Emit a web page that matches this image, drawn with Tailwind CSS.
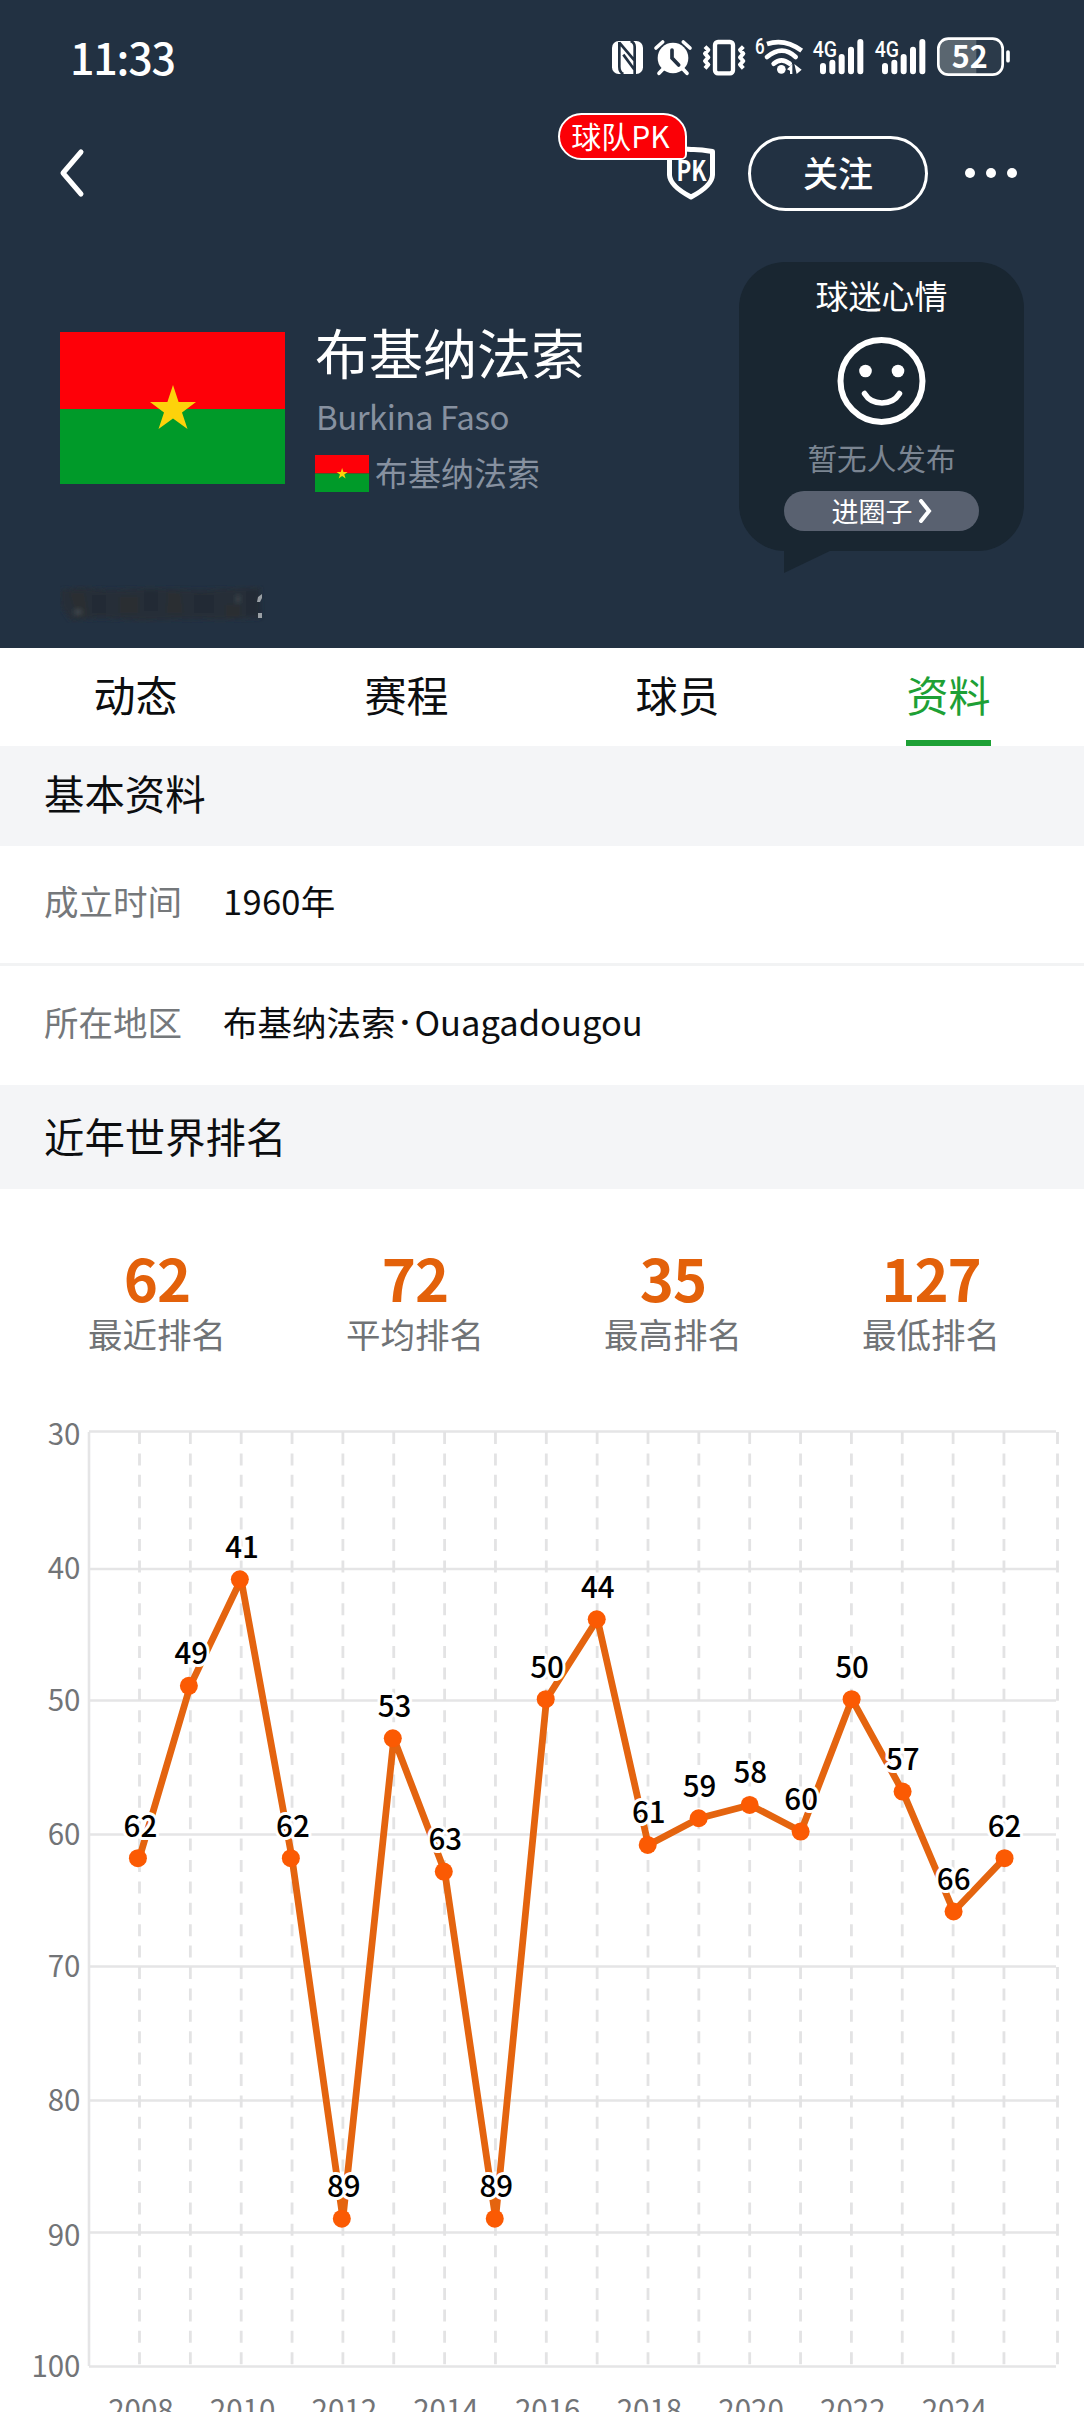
<!DOCTYPE html>
<html lang="zh-CN">
<head>
<meta charset="utf-8">
<title>布基纳法索</title>
<script src="https://cdn.jsdelivr.net/npm/@tailwindcss/browser@4"></script>
</head>
<body class="w-[1084px] h-[2412px] overflow-hidden bg-white font-['Noto_Sans_CJK_SC',sans-serif] text-[#0c0e10]">
<header class="h-[648px] bg-[#223142] text-white">
  <div class="flex h-[90px] items-start justify-between pl-[70px] pr-[54px] pt-5">
    <div class="text-[43px] leading-[72px] font-medium tracking-[-1.2px]">11:33</div>
    <svg class="h-[70px] w-[440px] shrink-0" viewBox="0 0 1320 210" fill="#fff" stroke="none">
      <rect x="66" y="63" width="93" height="99" rx="20"/>
      <g fill="none" stroke="#223142" stroke-width="8"><path d="M88 66v74q0 16 12 22M134 162V80q0-12-12-17M88 68l46 54M100 104l34 46"/></g>
      <circle cx="249" cy="114" r="46"/>
      <path d="M198 84l20-18M300 84l-20-18M220 146l-13 14M278 146l13 14" stroke="#fff" stroke-width="11" stroke-linecap="round"/>
      <path d="M246 90v24l20 21" fill="none" stroke="#223142" stroke-width="11" stroke-linecap="round"/>
      <rect x="375" y="66" width="54" height="94" rx="9" fill="none" stroke="#fff" stroke-width="13"/>
      <path d="M345 80l10 10-10 11 10 11-10 11 10 11-10 11M460 80l-10 10 10 11-10 11 10 11-10 11 10 11" fill="none" stroke="#fff" stroke-width="12" stroke-linejoin="round"/>
      <g fill="none" stroke="#fff" stroke-width="14"><path d="M531 72q53-18 104 20"/><path d="M531 111q46-38 86 0M551 131q23-20 48 0" stroke-linecap="round"/></g>
      <circle cx="574" cy="148" r="13"/>
      <path d="M591 148l16-16v30h-7v-10zM613 132l22 17-15 13z"/>
      <g font-family="Roboto, sans-serif" font-weight="500"><text x="495" y="103" font-size="66" textLength="29" lengthAdjust="spacingAndGlyphs">6</text>
      <text x="668" y="110" font-size="66" textLength="73" lengthAdjust="spacingAndGlyphs">4G</text>
      <text x="854" y="110" font-size="66" textLength="73" lengthAdjust="spacingAndGlyphs">4G</text></g>
      <g stroke="#fff" stroke-width="18" stroke-linecap="round"><path d="M699 138v16M727 128v26M755 111v43M783 89v65M811 66v88M885 138v16M913 128v26M941 111v43M969 89v65M997 66v88"/></g>
      <rect x="1043" y="56" width="195" height="108" rx="30" fill="#2b3a4a"/>
      <path d="M1073 56h86v108h-86a30 30 0 0 1-30-30V86a30 30 0 0 1 30-30z" fill="#5a6670"/>
      <rect x="1045" y="56" width="193" height="108" rx="30" fill="none" stroke="#fff" stroke-width="8"/>
      <path d="M1254 96v26" stroke="#fff" stroke-width="11" stroke-linecap="round"/>
      <text x="1139" y="144" font-size="92" font-weight="700" text-anchor="middle" font-family="Noto Sans CJK SC, sans-serif" textLength="108" lengthAdjust="spacingAndGlyphs">52</text>
    </svg>
  </div>

  <div class="flex h-[166px] items-center pl-[58px] pr-[67px]">
    <svg class="h-[52px] w-7" viewBox="0 0 28 52" fill="none" stroke="#fff" stroke-width="5" stroke-linecap="round" stroke-linejoin="round"><path d="M23 5L5 26l18 21"/></svg>
    <div class="relative ml-auto mr-[33px] h-[54px] w-12">
      <svg class="size-full" viewBox="0 0 48 54"><path d="M24 3.5Q32 3 45.500 5.500V29Q45 40 24 51Q3 40 2.500 29V5.500Q15 2 24 3.500z" fill="none" stroke="#fff" stroke-width="5" stroke-linejoin="round"/><text x="24.500" y="35" font-family="Noto Sans CJK SC, sans-serif" font-size="28" font-weight="700" fill="#fff" text-anchor="middle" textLength="30" lengthAdjust="spacingAndGlyphs">PK</text></svg>
      <div class="absolute right-7 -top-[33px] flex h-[47px] w-[129px] items-center justify-center rounded-[24px] rounded-br-md border-[2.5px] border-white bg-[#fb0006] text-[30px] leading-none whitespace-nowrap"><span class="-mt-1 -ml-1">球队PK</span></div>
    </div>
    <div class="mt-px flex h-[75px] w-[180px] items-center justify-center rounded-full border-[3px] border-white text-[35px] leading-none font-medium"><span class="-mt-1">关注</span></div>
    <div class="ml-[37px] flex gap-[11px]"><i class="size-2.5 rounded-full bg-white"></i><i class="size-2.5 rounded-full bg-white"></i><i class="size-2.5 rounded-full bg-white"></i></div>
  </div>

  <div class="flex items-start pl-[60px] pr-[60px] pt-[6px]">
    <div class="flex flex-col">
      <svg class="mt-[70px] h-[152px] w-[225px]" viewBox="0 0 225 152"><path fill="#fe0008" d="M0 0h225v77H0z"/><path fill="#009a29" d="M0 77h225v75H0z"/><path fill="#fdd20b" d="M113 53l5.600 17H136l-14 10.500 5.500 16.500L113 86.600 98.500 97l5.500-16.500L90 70h17.400z"/></svg>
      <svg class="mt-[101px] h-[38px] w-[206px]" viewBox="0 0 206 38">
        <defs><filter id="soft" x="-10%" y="-20%" width="120%" height="140%"><feGaussianBlur stdDeviation="2"/></filter></defs>
        <g filter="url(#soft)"><path fill="#252e38" d="M0 5l20-3 30 3 40-2 50 2 60-3 1 31-40 2-30-1-50 2-40-3-30 3-10-14z"/><path fill="#2b2e31" d="M10 8h14l4 22-10 4zM60 12h18v16H60zM108 8h12l3 20h-16zM166 20h14v12h-14z"/><path fill="#222a34" d="M32 10h14v18H32zM84 6h14v20H84zM134 10h20v18h-20zM186 6h14v24h-14z"/><path fill="#3b424a" d="M14 24h8v6h-8zM176 10h4v8h-4z"/></g>
        <path fill="#9aa0a5" d="M198 12l4-3v4l-2 4h-3zM198 28h4v5h-4z"/>
      </svg>
    </div>
    <div class="ml-[30px] flex flex-col">
      <div class="mt-[59px] h-[62px] text-[54px] leading-[62px]">布基纳法索</div>
      <div class="mt-[11px] h-[44px] pl-[1px] text-[33px] leading-[44px] tracking-[-0.5px] text-[#8791a0]">Burkina Faso</div>
      <div class="mt-[13px] flex h-[44px] items-center gap-[6px]">
        <svg class="h-[37px] w-[54px]" viewBox="0 0 225 152" preserveAspectRatio="none"><path fill="#fe0008" d="M0 0h225v76H0z"/><path fill="#009a29" d="M0 76h225v76H0z"/><path fill="#fdd20b" d="M113 53l5.600 17H136l-14 10.500 5.500 16.500L113 86.600 98.500 97l5.500-16.500L90 70h17.400z"/></svg>
        <span class="-mt-[2px] text-[33px] leading-[44px] text-[#8791a0]">布基纳法索</span>
      </div>
    </div>
    <div class="relative ml-auto flex h-[289px] w-[285px] flex-col items-center rounded-[46px] bg-[#192631]">
      <div class="mt-[10px] text-[33px] leading-[46px]">球迷心情</div>
      <svg class="mt-[17px] size-[92px]" viewBox="0 0 92 92" fill="none" stroke="#fff"><circle cx="45.500" cy="46" r="41" stroke-width="6"/><g fill="#fff" stroke="none"><circle cx="29.500" cy="36" r="6.300"/><circle cx="62" cy="36" r="6.300"/></g><path d="M28.500 58.500C36 71 56 71 63.500 58.500" stroke-width="5.500" stroke-linecap="round"/></svg>
      <div class="mt-[11px] text-[29.600px] leading-[40px] text-[#7b8592]">暂无人发布</div>
      <div class="mt-[13px] flex h-10 w-[195px] items-center justify-center gap-[5px] rounded-full bg-[#596170] text-[27px] leading-none"><span class="-mt-[2px]">进圈子</span><svg class="h-6 w-3.5" viewBox="0 0 14 24" fill="none" stroke="#fff" stroke-width="4" stroke-linecap="round"><path d="M3 2l8 10-8 10"/></svg></div>
      <svg class="absolute left-[45px] top-[288px] h-[23px] w-12" viewBox="0 0 48 23"><path d="M0 0h48L0 23z" fill="#192631"/></svg>
    </div>
  </div>
</header>

<nav class="grid h-[98px] grid-cols-4 text-center text-[42px] leading-[92px]">
  <div>动态</div><div>赛程</div><div>球员</div>
  <div class="flex justify-center text-[#1da035]"><span class="h-[98px] border-b-[6px] border-[#1da035]">资料</span></div>
</nav>
<h2 class="h-[100px] bg-[#f4f5f7] pl-11 text-[40.400px] leading-[94px]">基本资料</h2>
<div class="flex h-[120px] border-b-[3px] border-[#f2f3f4] pl-11 text-[34.500px] leading-[108px]"><span class="w-[179px] text-[#75787b]">成立时间</span><span class="tracking-[0.3px]">1960年</span></div>
<div class="flex h-[119px] pl-11 text-[34.500px] leading-[110px]"><span class="w-[179px] shrink-0 text-[#75787b]">所在地区</span><span>布基纳法索</span><span class="w-[19px] text-center font-['Roboto',sans-serif] leading-[112px] font-bold">·</span><span>Ouagadougou</span></div>
<h2 class="h-[104px] bg-[#f4f5f7] pl-11 text-[40.400px] leading-[101px]">近年世界排名</h2>

<section class="grid grid-cols-4 pl-[28px] pr-[24px] pt-[53px] text-center">
  <div><div class="text-[58px] leading-[70px] font-bold tracking-[-1px] text-[#e3610a]">62</div><div class="text-[34.500px] leading-[42px] text-[#707376]">最近排名</div></div>
  <div><div class="text-[58px] leading-[70px] font-bold tracking-[-1px] text-[#e3610a]">72</div><div class="text-[34.500px] leading-[42px] text-[#707376]">平均排名</div></div>
  <div><div class="text-[58px] leading-[70px] font-bold tracking-[-1px] text-[#e3610a]">35</div><div class="text-[34.500px] leading-[42px] text-[#707376]">最高排名</div></div>
  <div><div class="text-[58px] leading-[70px] font-bold tracking-[-1px] text-[#e3610a]">127</div><div class="text-[34.500px] leading-[42px] text-[#707376]">最低排名</div></div>
</section>

<svg id="chart" class="mt-[46px] block h-[1012px] w-[1084px]" viewBox="0 1400 1084 1012" font-family="Noto Sans CJK SC, sans-serif" font-size="29.500"></svg>
<script>
  const ranks = [62, 49, 41, 62, 89, 53, 63, 89, 50, 44, 61, 59, 58, 60, 50, 57, 66, 62];
  const rows = [[30, 1431.5, 1444.5], [40, 1569, 1579], [50, 1700.5, 1711], [60, 1834.5, 1844.5], [70, 1966.5, 1977], [80, 2100.5, 2111], [90, 2232.5, 2245.5], [100, 2366.5, 2377]];
  const y = r => 1579.3 + (r - 41) * 13.32 - (r > 50 && r < 80 ? 0.8 : 0);
  let s = '';
  for (const [v, ly, ty] of rows) {
    s += `<path d="M89 ${ly}H1056" stroke="#e5e5e6" stroke-width="2.600"/>`;
    s += `<text x="80.500" y="${ty}" text-anchor="end" fill="#727477">${v}</text>`;
  }
  s += '<path d="M89 1432V2366" stroke="#e5e5e6" stroke-width="2.600"/>';
  for (let i = 0; i <= 18; i++) {
    const x = i === 18 ? 1057.5 : 139.5 + i * 50.85;
    s += `<path d="M${x} 1432V2366" stroke="#e3e3e4" stroke-width="2.800" stroke-dasharray="12 9.400"/>`;
  }
  s += `<polyline points="${ranks.map((r, i) => (139.3 + i * 50.9) + ',' + y(r)).join(' ')}" fill="none" stroke="#e4640f" stroke-width="6.800" stroke-linejoin="round"/>`;
  ranks.forEach((r, i) => { s += `<circle cx="${137.9 + i * 50.98}" cy="${y(r)}" r="9" fill="#fb5a03"/>`; });
  ranks.forEach((r, i) => { s += `<text x="${140.4 + i * 50.83}" y="${y(r) - 21.5}" text-anchor="middle" font-weight="500" fill="#000" stroke="#fff" stroke-width="6" stroke-linejoin="round" paint-order="stroke">${r}</text>`; });
  for (let i = 0; i < 9; i++) s += `<text x="${140.9 + i * 101.7}" y="2420.500" text-anchor="middle" fill="#727477">${2008 + i * 2}</text>`;
  document.getElementById('chart').innerHTML = s;
</script>
</body>
</html>
